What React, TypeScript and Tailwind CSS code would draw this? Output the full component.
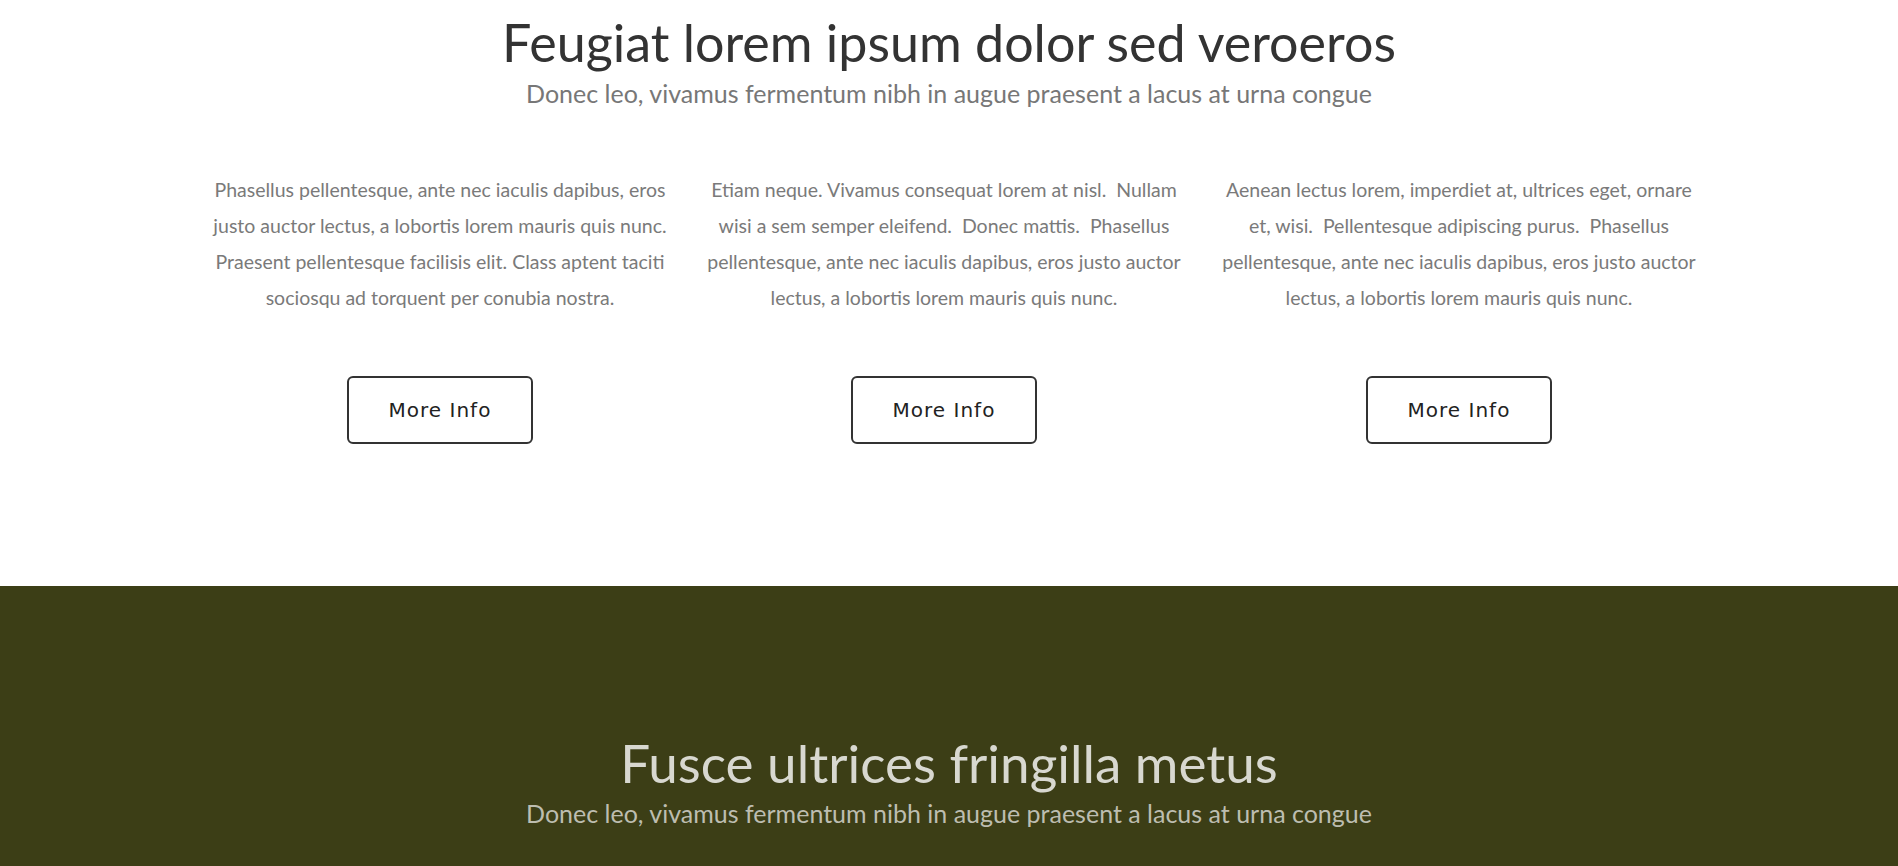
const columns = [
  {
    lines: [
      'Phasellus pellentesque, ante nec iaculis dapibus, eros',
      'justo auctor lectus, a lobortis lorem mauris quis nunc.',
      'Praesent pellentesque facilisis elit. Class aptent taciti',
      'sociosqu ad torquent per conubia nostra.',
    ],
  },
  {
    lines: [
      'Etiam neque. Vivamus consequat lorem at nisl.\u00a0 Nullam',
      'wisi a sem semper eleifend.\u00a0 Donec mattis.\u00a0 Phasellus',
      'pellentesque, ante nec iaculis dapibus, eros justo auctor',
      'lectus, a lobortis lorem mauris quis nunc.',
    ],
  },
  {
    lines: [
      'Aenean lectus lorem, imperdiet at, ultrices eget, ornare',
      'et, wisi.\u00a0 Pellentesque adipiscing purus.\u00a0 Phasellus',
      'pellentesque, ante nec iaculis dapibus, eros justo auctor',
      'lectus, a lobortis lorem mauris quis nunc.',
    ],
  },
];

export default function App() {
  return (
    <div className="min-h-screen bg-white font-['Lato',sans-serif]">
      {/* Intro */}
      <section className="pt-[12px] pb-[142px]">
        <div className="text-center">
          <h2 className="text-[52px] leading-[60px] text-[#333333] font-normal">
            Feugiat lorem ipsum dolor sed veroeros
          </h2>
          <p className="mt-[6px] text-[25px] leading-[30px] text-[#777777]">
            Donec leo, vivamus fermentum nibh in augue praesent a lacus at urna congue
          </p>
        </div>

        <div className="ml-[190px] mt-[64px] grid w-[1530px] grid-cols-[500px_508px_522px]">
          {columns.map((col, i) => (
            <div key={i} className="flex flex-col items-center">
              <p className="text-center text-[19.5px] leading-[36px] text-[#7a7a7a] whitespace-nowrap">
                {col.lines.map((line, j) => (
                  <span key={j} className="block">
                    {line}
                  </span>
                ))}
              </p>
              <button className="mt-[60px] h-[68px] w-[186px] rounded-[6px] border-2 border-[#333333] bg-white font-['DejaVu_Sans',sans-serif] text-[20px] tracking-[1px] text-[#222222]">
                More Info
              </button>
            </div>
          ))}
        </div>
      </section>

      {/* Dark band */}
      <section className="min-h-[300px] bg-[#3c3e16] pt-[145px] pb-[80px] text-center">
        <h2 className="text-[53px] leading-[64px] text-[#d8d8d0] font-normal">
          Fusce ultrices fringilla metus
        </h2>
        <p className="mt-[3px] text-[25px] leading-[30px] text-[#bdbdb0]">
          Donec leo, vivamus fermentum nibh in augue praesent a lacus at urna congue
        </p>
      </section>
    </div>
  );
}
